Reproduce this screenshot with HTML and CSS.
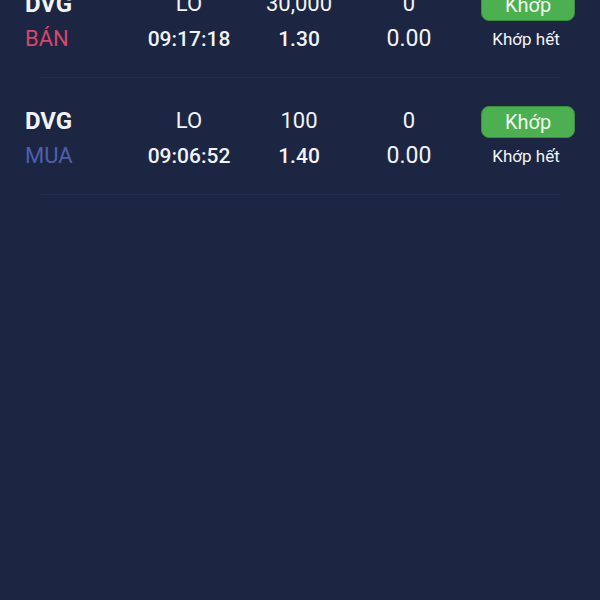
FILE: index.html
```html
<!DOCTYPE html>
<html lang="vi">
<head>
  <meta charset="UTF-8" />
  <meta name="viewport" content="width=device-width, initial-scale=1.0"/>
  <title>Sổ lệnh</title>
  <link rel="stylesheet" href="styles.css">
</head>
<body>
  <div class="orders">
    <div class="order">
      <div class="cell sym">DVG</div>
      <div class="cell">LO</div>
      <div class="cell">30,000</div>
      <div class="cell">0</div>
      <div class="cell"><button class="status">Khớp</button></div>
      <div class="cell side sell">BÁN</div>
      <div class="cell time">09:17:18</div>
      <div class="cell price">1.30</div>
      <div class="cell avg">0.00</div>
      <div class="cell note">Khớp hết</div>
    </div>
    <div class="sep"></div>
    <div class="order">
      <div class="cell sym">DVG</div>
      <div class="cell">LO</div>
      <div class="cell">100</div>
      <div class="cell">0</div>
      <div class="cell"><button class="status">Khớp</button></div>
      <div class="cell side buy">MUA</div>
      <div class="cell time">09:06:52</div>
      <div class="cell price">1.40</div>
      <div class="cell avg">0.00</div>
      <div class="cell note">Khớp hết</div>
    </div>
    <div class="sep"></div>
  </div>
</body>
</html>
```

FILE: styles.css
```css
html{background:#1c2541;}
body{margin:0;font-family:Roboto,"Noto Sans",sans-serif;color:#f2f3f7;min-height:100vh;background:#1c2541;overflow:hidden;}
.orders{margin-top:-39px;}
/* Row: 2 lines x 5 columns */
.order{display:grid;grid-template-columns:109px 110px 110px 110px 128px;grid-auto-rows:35px;align-items:center;padding:25px 8px 21px 25px;}
.cell{text-align:center;font-size:22px;white-space:nowrap;}
.sym{text-align:left;font-weight:700;font-size:24px;}
.side{text-align:left;font-size:22px;}
.sell{color:#d8456a;}
.buy{color:#4d60ad;}
.time,.price{font-weight:500;font-size:21px;}
.avg{font-size:23px;}
.note{font-size:17px;padding-right:4px;}
.status{width:94px;height:32px;margin-top:3px;border:1px solid #3c8e3f;border-radius:8px;background:#4caf50;color:#eef8ee;font-family:inherit;font-size:20px;padding:0;}
.sep{height:1px;margin:0 40px;background:#242e4c;}
```
